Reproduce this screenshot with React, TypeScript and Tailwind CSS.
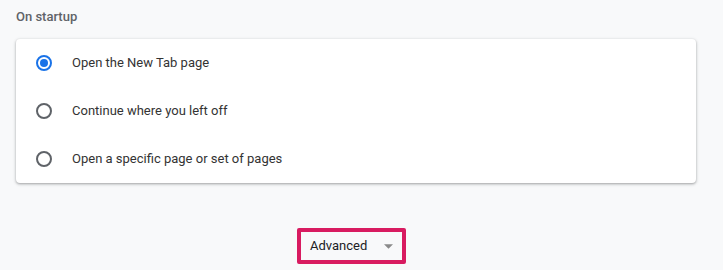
const options = [
  "Open the New Tab page",
  "Continue where you left off",
  "Open a specific page or set of pages",
];

function Radio({ checked }: { checked: boolean }) {
  return (
    <span
      className={`w-4 h-4 rounded-full border-2 flex items-center justify-center shrink-0 ${checked ? "border-[#1a73e8]" : "border-[#5f6368]"}`}
    >
      {checked && <span className="w-2 h-2 rounded-full bg-[#1a73e8]" />}
    </span>
  );
}

export default function App() {
  return (
    <div className="w-[723px] h-[270px] bg-[#f8f9fa] overflow-hidden font-['Roboto',sans-serif]">
      <div className="pl-4 w-[696px]">
        <h2 className="h-[39px] pt-[8px] text-[13px] font-medium text-[#5f6368] leading-[18px]">On startup</h2>
        <div className="bg-white rounded shadow-[0_1px_2px_rgba(60,64,67,0.3),0_1px_3px_1px_rgba(60,64,67,0.15)]">
          {options.map((label, i) => (
            <div key={label} className="h-12 flex items-center pl-5 gap-5">
              <Radio checked={i === 0} />
              <span className="text-[13px] text-[#333333]">{label}</span>
            </div>
          ))}
        </div>
        <div className="mt-[45px] ml-[281px] w-[109px] h-[36px] border-4 border-[#d81b60] rounded-[2px] flex items-center justify-between pl-[9px] pr-[9px]">
          <span className="text-[13px] text-[#202124]">Advanced</span>
          <svg width="9" height="5" viewBox="0 0 10 5">
            <path d="M0 0 L10 0 L5 5 Z" fill="#8a8a8a" />
          </svg>
        </div>
      </div>
    </div>
  );
}
